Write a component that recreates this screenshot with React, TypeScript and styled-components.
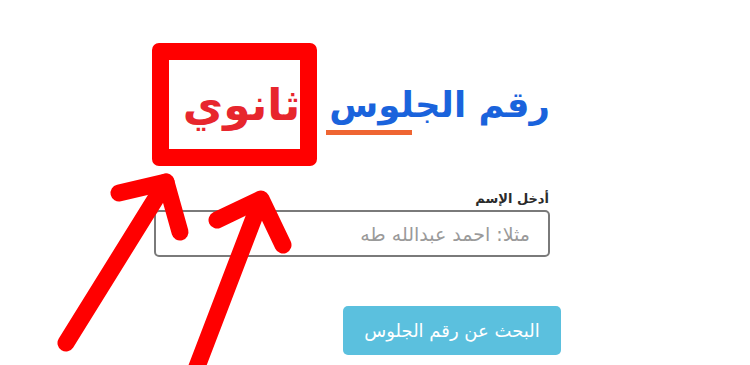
import React from "react";
import styled, { createGlobalStyle } from "styled-components";

const Global = createGlobalStyle`
  html, body { margin: 0; padding: 0; background: #ffffff; }
  body { width: 750px; height: 365px; overflow: hidden; font-family: "DejaVu Sans", "Noto Sans", sans-serif; }
`;

const Page = styled.div`
  position: relative;
  width: 750px;
  height: 365px;
  padding: 43px 0 0 151px;
  box-sizing: border-box;
`;

const Form = styled.div`
  width: 399px;
  display: flex;
  flex-direction: column;
  direction: rtl;
`;

const Header = styled.div`
  display: flex;
  align-items: center;
  gap: 12px;
`;

const Title = styled.h1`
  position: relative;
  flex-shrink: 0;
  white-space: nowrap;
  margin: 0;
  font-size: 35.5px;
  font-weight: bold;
  color: #1a63dc;
  line-height: 1;
  &::after {
    content: "";
    position: absolute;
    left: -3px;
    bottom: -13px;
    width: 86px;
    height: 5px;
    background: #ef6532;
  }
`;

const Highlight = styled.div`
  flex-shrink: 0;
  width: 131px;
  height: 89px;
  box-sizing: content-box;
  border: 17px solid #ff0000;
  border-radius: 7px;
  display: flex;
  align-items: center;
  justify-content: flex-start;
  padding: 0;
  color: #e7262d;
  font-size: 44px;
  font-weight: bold;
  white-space: nowrap;
  background: #fff;
`;

const Label = styled.label`
  margin: 25px 1px 4px 0;
  font-size: 13px;
  font-weight: bold;
  color: #2b2b2b;
`;

const Input = styled.input`
  width: 396px;
  height: 47px;
  box-sizing: border-box;
  border: 2px solid #7a7a7a;
  border-radius: 5px;
  padding: 0 18px;
  font-family: "DejaVu Sans", "Noto Sans", sans-serif;
  font-size: 19px;
  direction: rtl;
  color: #333;
  &::placeholder { color: #9a9a9a; }
`;

const Button = styled.button`
  align-self: flex-start;
  margin: 49px -11px 0 0;
  width: 218px;
  height: 49px;
  border: none;
  border-radius: 5px;
  background: #5bc0de;
  color: #ffffff;
  font-family: "DejaVu Sans", "Noto Sans", sans-serif;
  font-size: 18px;
`;

const Arrows = styled.svg`
  position: absolute;
  left: 0;
  top: 0;
  pointer-events: none;
`;

export default function App() {
  return (
    <>
      <Global />
      <Page>
        <Form>
          <Header>
            <Title>رقم الجلوس</Title>
            <Highlight>ثانوي</Highlight>
          </Header>
          <Label>أدخل الإسم</Label>
          <Input placeholder="مثلا: احمد عبدالله طه" />
          <Button>البحث عن رقم الجلوس</Button>
        </Form>
        <Arrows width="750" height="365" viewBox="0 0 750 365">
          <g fill="none" stroke="#ff0000" strokeWidth="17" strokeLinecap="round" strokeLinejoin="round">
            <path d="M66 343 L166 182" />
            <path d="M119 193 L166 182 L180 232" />
            <path d="M190 385 L260 202" />
            <path d="M217 220 L261 199 L283 245" />
          </g>
        </Arrows>
      </Page>
    </>
  );
}
